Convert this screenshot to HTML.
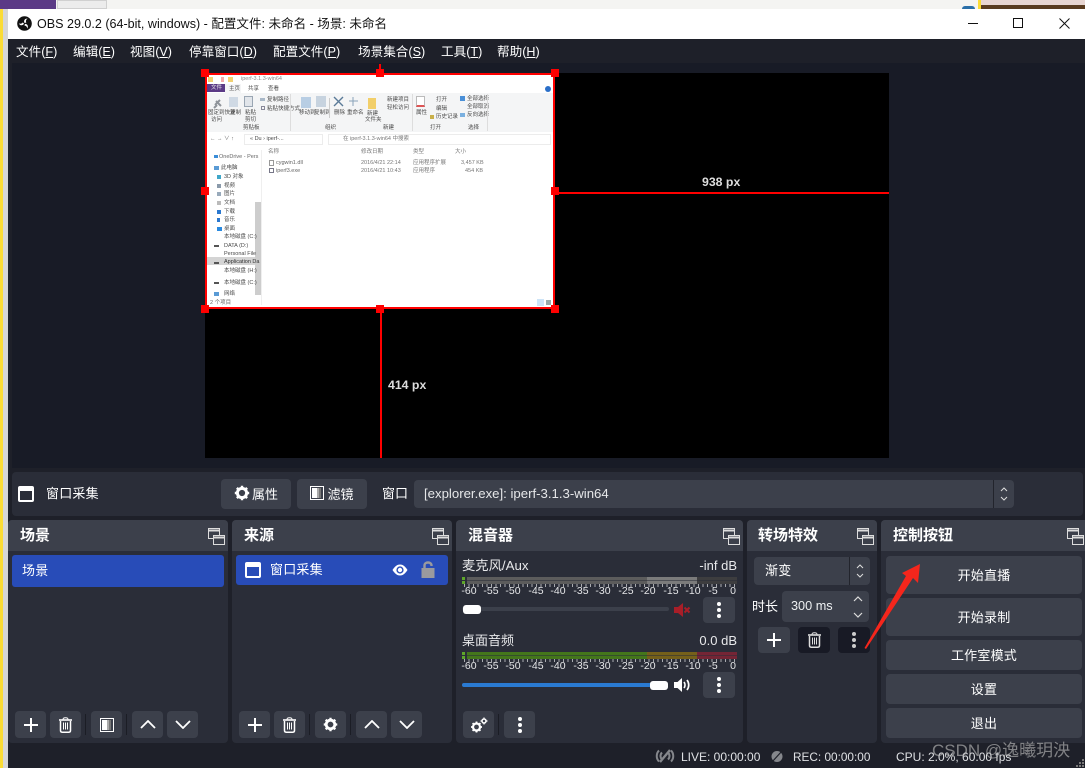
<!DOCTYPE html>
<html lang="zh"><head><meta charset="utf-8"><title>OBS</title>
<style>
html,body{margin:0;padding:0;width:1085px;height:768px;overflow:hidden;background:#f2f2f0}
*{box-sizing:border-box}
body{position:relative;font-family:"Liberation Sans","Noto Sans CJK SC",sans-serif;color:#fff;font-size:13px}
.a{position:absolute}
.t{position:absolute;white-space:nowrap;line-height:16px}
.btn{position:absolute;background:#3c404b;border-radius:4px;display:flex;align-items:center;justify-content:center;color:#fff}
.dock{position:absolute;top:520px;height:223px;background:#2a2d38;border-radius:4px;overflow:hidden}
.hd{position:absolute;left:0;right:0;top:0;height:31px;background:#3c404b}
.hd b{position:absolute;left:12px;top:7px;font-size:15px;line-height:18px;font-weight:700}
.hd svg{position:absolute;top:8px}
.menu u{text-decoration:underline}
.sep{position:absolute;width:1px;background:#1b1d25}
.tick{position:absolute;left:464px;width:273px;height:3px;background:repeating-linear-gradient(90deg,#a9abb0 0 1px,transparent 1px 4.5px)}
.sc{position:absolute;width:20px;margin-left:-10px;text-align:center;font-size:10.5px;line-height:12px;color:#e4e5e7}
.e{position:absolute;white-space:nowrap;font-size:5.5px;line-height:6px;color:#4a4a4a}
.ctl{font-size:13px;letter-spacing:.2px;padding-bottom:2px}
.lb{padding-bottom:2px}
.h{position:absolute;width:8px;height:8px;background:#f00}
#ex{filter:blur(.25px)}
</style></head><body>

<!-- desktop behind -->
<div class="a" style="left:0;top:0;width:3px;height:768px;background:#fbdc35"></div>
<div class="a" style="left:3px;top:0;width:5px;height:768px;background:#d6d6d6"></div>
<div class="a" style="left:0;top:0;width:56px;height:9px;background:#5b3a86"></div>
<div class="a" style="left:57px;top:0;width:50px;height:9px;background:#ececec;border:1px solid #d0d0d0"></div>
<div class="a" style="left:107px;top:0;width:871px;height:9px;background:#f4f4f2"></div>
<div class="a" style="left:962px;top:6px;width:13px;height:3px;border-radius:6px 6px 0 0;background:#2a6fa8"></div>
<div class="a" style="left:978px;top:0;width:3px;height:9px;background:#fbdc35"></div>
<div class="a" style="left:981px;top:0;width:104px;height:5px;background:#e8d6d2"></div>
<div class="a" style="left:981px;top:5px;width:104px;height:4px;background:#5a3c20"></div>

<!-- window -->
<div class="a" style="left:8px;top:9px;width:1077px;height:30px;background:#fff"></div>
<svg class="a" style="left:17px;top:16px" width="15" height="15" viewBox="0 0 15 15"><circle cx="7.5" cy="7.5" r="7.3" fill="#111"/><g fill="#fff"><path id="bl" d="M7.6 7C6.300 5 7.600 2.300 10.600 2.700 9 3.400 8.600 5 9.300 6.600 8.800 6.600 8.200 6.700 7.600 7z"/><path d="M7.600 7C6.300 5 7.600 2.300 10.600 2.700 9 3.400 8.600 5 9.300 6.600 8.800 6.600 8.200 6.700 7.600 7z" transform="rotate(120 7.500 7.500)"/><path d="M7.600 7C6.300 5 7.600 2.300 10.600 2.700 9 3.400 8.600 5 9.300 6.600 8.800 6.600 8.200 6.700 7.600 7z" transform="rotate(240 7.500 7.500)"/></g></svg>
<div class="t" style="left:37px;top:16px;color:#111;font-size:12.55px">OBS 29.0.2 (64-bit, windows) - 配置文件: 未命名 - 场景: 未命名</div>
<div class="a" style="left:968px;top:23px;width:10px;height:1px;background:#111"></div>
<div class="a" style="left:1013px;top:18px;width:10px;height:10px;border:1px solid #111"></div>
<svg class="a" style="left:1059px;top:18px" width="11" height="11" viewBox="0 0 11 11"><path d="M.5.5l10 10M10.500.5l-10 10" stroke="#111" fill="none"/></svg>

<div class="a" style="left:8px;top:39px;width:1077px;height:729px;background:#1e2029"></div>
<!-- menu -->
<div class="menu" style="font-size:12.6px">
<div class="t" style="left:16px;top:44px">文件(<u>F</u>)</div>
<div class="t" style="left:73px;top:44px">编辑(<u>E</u>)</div>
<div class="t" style="left:130px;top:44px">视图(<u>V</u>)</div>
<div class="t" style="left:189px;top:44px">停靠窗口(<u>D</u>)</div>
<div class="t" style="left:273px;top:44px">配置文件(<u>P</u>)</div>
<div class="t" style="left:358px;top:44px">场景集合(<u>S</u>)</div>
<div class="t" style="left:441px;top:44px">工具(<u>T</u>)</div>
<div class="t" style="left:497px;top:44px">帮助(<u>H</u>)</div>
</div>

<!-- preview -->
<div class="a" style="left:12px;top:63px;width:1073px;height:405px;background:#181b26"></div>
<div class="a" style="left:205px;top:73px;width:684px;height:385px;background:#000"></div>

<!-- captured explorer -->
<div id="ex" class="a" style="left:205px;top:73px;width:350px;height:236px;background:#fff;overflow:hidden">
  <div class="a" style="left:3px;top:4px;width:5px;height:5px;background:#f2d272"></div>
  <div class="a" style="left:16px;top:4px;width:3px;height:5px;background:#e88;opacity:.7"></div>
  <div class="a" style="left:23px;top:4px;width:5px;height:5px;background:#f2d272"></div>
  <div class="e" style="left:36px;top:3px;color:#888">iperf-3.1.3-win64</div>
  <div class="a" style="left:2px;top:20px;width:346px;height:39px;background:#f4f5f6"></div>
  <div class="a" style="left:2px;top:11px;width:18px;height:8px;background:#5b3a86"></div>
  <div class="e" style="left:6px;top:12px;color:#eee">文件</div>
  <div class="a" style="left:20px;top:11px;width:16px;height:9px;background:#f4f5f6"></div>
  <div class="e" style="left:24px;top:13px">主页</div>
  <div class="e" style="left:43px;top:13px">共享</div>
  <div class="e" style="left:63px;top:13px">查看</div>
  <svg class="a" style="left:8px;top:26px" width="9" height="10"><path d="M7 1L2 6M1 9l3-3M3 2l5 5" stroke="#8f949a" stroke-width="2"/></svg>
  <div class="a" style="left:24px;top:24px;width:9px;height:10px;background:#cfd9e4"></div>
  <div class="a" style="left:39px;top:23px;width:9px;height:11px;background:#e1e5ea;border:1px solid #9aa6b3"></div>
  <div class="a" style="left:55px;top:25px;width:5px;height:3px;background:#a9b8c8"></div>
  <div class="a" style="left:56px;top:33px;width:4px;height:4px;border:1px solid #889"></div>
  <div class="e" style="left:62px;top:24px">复制路径</div>
  <div class="e" style="left:62px;top:33px">粘贴快捷方式</div>
  <div class="e" style="left:3px;top:37px">固定到快速</div>
  <div class="e" style="left:6px;top:44px">访问</div>
  <div class="e" style="left:25px;top:37px">复制</div>
  <div class="e" style="left:40px;top:37px">粘贴</div>
  <div class="e" style="left:40px;top:44px">剪切</div>
  <div class="e" style="left:38px;top:52px">剪贴板</div>
  <div class="a" style="left:85px;top:21px;width:1px;height:37px;background:#ddd"></div>
  <div class="a" style="left:96px;top:24px;width:10px;height:11px;background:#b8cee4"></div>
  <div class="a" style="left:111px;top:23px;width:10px;height:11px;background:#c7d3df"></div>
  <div class="e" style="left:94px;top:37px">移动到</div>
  <div class="e" style="left:109px;top:37px">复制到</div>
  <div class="a" style="left:124px;top:25px;width:1px;height:20px;background:#ccc"></div>
  <svg class="a" style="left:128px;top:23px" width="28" height="11"><path d="M1 1l9 9M10 1l-9 9" stroke="#5a7a98" stroke-width="1.400"/><path d="M16 5h9M20 1v9" stroke="#8aa3ba"/></svg>
  <div class="e" style="left:129px;top:37px">删除</div>
  <div class="e" style="left:142px;top:37px">重命名</div>
  <div class="e" style="left:120px;top:52px">组织</div>
  <div class="a" style="left:163px;top:25px;width:8px;height:11px;background:#f2cf6a"></div>
  <div class="e" style="left:162px;top:38px">新建</div>
  <div class="e" style="left:160px;top:44px">文件夹</div>
  <div class="e" style="left:182px;top:24px">新建项目</div>
  <div class="e" style="left:182px;top:32px">轻松访问</div>
  <div class="e" style="left:178px;top:52px">新建</div>
  <div class="a" style="left:207px;top:21px;width:1px;height:37px;background:#ddd"></div>
  <div class="a" style="left:211px;top:23px;width:9px;height:11px;background:#fff;border:1px solid #bbb;border-bottom:2px solid #d55"></div>
  <div class="e" style="left:211px;top:37px">属性</div>
  <div class="e" style="left:231px;top:24px">打开</div>
  <div class="e" style="left:231px;top:33px">编辑</div>
  <div class="a" style="left:225px;top:42px;width:4px;height:4px;background:#c9b04a"></div>
  <div class="e" style="left:231px;top:41px">历史记录</div>
  <div class="e" style="left:225px;top:52px">打开</div>
  <div class="a" style="left:255px;top:23px;width:5px;height:5px;background:#4a90d8"></div>
  <div class="a" style="left:255px;top:40px;width:5px;height:4px;background:#7ab0e0"></div>
  <div class="e" style="left:262px;top:23px">全部选择</div>
  <div class="e" style="left:262px;top:31px">全部取消</div>
  <div class="e" style="left:262px;top:39px">反向选择</div>
  <div class="e" style="left:263px;top:52px">选择</div>
  <div class="a" style="left:282px;top:21px;width:1px;height:37px;background:#ddd"></div>
  <div class="a" style="left:340px;top:13px;width:6px;height:6px;border-radius:3px;background:#2a6fc9"></div>
  <div class="e" style="left:5px;top:63px;color:#666">← → ∨ ↑</div>
  <div class="a" style="left:39px;top:61px;width:79px;height:11px;border:1px solid #ececec"></div>
  <div class="e" style="left:45px;top:63px">« Du  ›  iperf-...</div>
  <div class="a" style="left:123px;top:61px;width:223px;height:11px;border:1px solid #ececec"></div>
  <div class="e" style="left:138px;top:63px;color:#777">在 iperf-3.1.3-win64 中搜索</div>
  <div class="a" style="left:56px;top:77px;width:1px;height:155px;background:#efefef"></div>
  <div class="a" style="left:50px;top:129px;width:6px;height:93px;background:#cdcdcd"></div>
  <div class="a" style="left:2px;top:184px;width:48px;height:8px;background:#d4d4d4"></div>
  <div class="e" style="left:14px;top:81px;color:#666">OneDrive - Pers</div>
  <div class="e" style="left:16px;top:92px">此电脑</div>
  <div class="e" style="left:19px;top:101px">3D 对象</div>
  <div class="e" style="left:19px;top:110px">视频</div>
  <div class="e" style="left:19px;top:118px">图片</div>
  <div class="e" style="left:19px;top:127px">文档</div>
  <div class="e" style="left:19px;top:136px">下载</div>
  <div class="e" style="left:19px;top:144px">音乐</div>
  <div class="e" style="left:19px;top:153px">桌面</div>
  <div class="e" style="left:19px;top:161px">本地磁盘 (C:)</div>
  <div class="e" style="left:19px;top:170px">DATA (D:)</div>
  <div class="e" style="left:19px;top:178px">Personal File</div>
  <div class="e" style="left:19px;top:186px;color:#333">Application Da</div>
  <div class="e" style="left:19px;top:195px">本地磁盘 (H:)</div>
  <div class="e" style="left:19px;top:207px">本地磁盘 (C:)</div>
  <div class="e" style="left:19px;top:218px">网络</div>
  <div class="a" style="left:9px;top:82px;width:4px;height:3px;background:#3a8dd8"></div>
  <div class="a" style="left:9px;top:93px;width:5px;height:4px;background:#5a9bd5"></div>
  <div class="a" style="left:12px;top:102px;width:4px;height:4px;background:#3fa7c9"></div>
  <div class="a" style="left:12px;top:111px;width:4px;height:4px;background:#8a9aaa"></div>
  <div class="a" style="left:12px;top:119px;width:4px;height:4px;background:#9ab"></div>
  <div class="a" style="left:12px;top:128px;width:4px;height:4px;background:#bbb"></div>
  <div class="a" style="left:12px;top:137px;width:4px;height:4px;background:#2a78d0"></div>
  <div class="a" style="left:12px;top:145px;width:3px;height:4px;background:#2a78d0"></div>
  <div class="a" style="left:12px;top:154px;width:5px;height:4px;background:#2a8ae0"></div>
  <div class="a" style="left:9px;top:172px;width:5px;height:2px;background:#555"></div>
  <div class="a" style="left:9px;top:189px;width:5px;height:2px;background:#555"></div>
  <div class="a" style="left:9px;top:209px;width:5px;height:2px;background:#555"></div>
  <div class="a" style="left:9px;top:219px;width:5px;height:4px;background:#5a9bd5"></div>
  <div class="e" style="left:63px;top:76px;color:#777">名称</div>
  <div class="e" style="left:156px;top:76px;color:#777">修改日期</div>
  <div class="e" style="left:208px;top:76px;color:#777">类型</div>
  <div class="e" style="left:250px;top:76px;color:#777">大小</div>
  <div class="a" style="left:64px;top:87px;width:5px;height:6px;border:1px solid #999"></div>
  <div class="e" style="left:71px;top:87px;color:#666">cygwin1.dll</div>
  <div class="e" style="left:156px;top:87px;color:#777">2016/4/21 22:14</div>
  <div class="e" style="left:208px;top:87px;color:#777">应用程序扩展</div>
  <div class="e" style="left:256px;top:87px;color:#777">3,457 KB</div>
  <div class="a" style="left:64px;top:95px;width:5px;height:5px;border:1px solid #778"></div>
  <div class="e" style="left:71px;top:95px;color:#666">iperf3.exe</div>
  <div class="e" style="left:156px;top:95px;color:#777">2016/4/21 10:43</div>
  <div class="e" style="left:208px;top:95px;color:#777">应用程序</div>
  <div class="e" style="left:260px;top:95px;color:#777">454 KB</div>
  <div class="e" style="left:5px;top:227px;color:#666">2 个项目</div>
  <div class="a" style="left:332px;top:226px;width:7px;height:7px;background:#cde4f7"></div>
  <div class="a" style="left:341px;top:227px;width:5px;height:5px;background:#9aa"></div>
</div>
<!-- selection -->
<div class="a" style="left:205px;top:73px;width:350px;height:236px;border:2px solid #f00"></div>
<div class="h" style="left:201px;top:69px"></div><div class="h" style="left:376px;top:69px"></div><div class="h" style="left:551px;top:69px"></div>
<div class="h" style="left:201px;top:187px"></div><div class="h" style="left:551px;top:187px"></div>
<div class="h" style="left:201px;top:305px"></div><div class="h" style="left:376px;top:305px"></div><div class="h" style="left:551px;top:305px"></div>
<div class="a" style="left:379px;top:64px;width:2px;height:6px;background:#f00"></div>
<div class="a" style="left:555px;top:192px;width:334px;height:2px;background:#f00"></div>
<div class="a" style="left:380px;top:309px;width:2px;height:149px;background:#f00"></div>
<div class="t" style="left:702px;top:174px;font:bold 12.3px/16px 'Liberation Sans',sans-serif;color:#ddd">938 px</div>
<div class="t" style="left:388px;top:377px;font:bold 12.3px/16px 'Liberation Sans',sans-serif;color:#ddd">414 px</div>

<!-- toolbar -->
<div class="a" style="left:12px;top:472px;width:1071px;height:44px;background:#2a2d38;border-radius:4px"></div>
<svg class="a" style="left:18px;top:486px" width="16" height="16"><rect x="1" y="1" width="14" height="14" rx="1" fill="none" stroke="#fff" stroke-width="2"/><rect x="1" y="1" width="14" height="4" fill="#fff"/></svg>
<div class="t" style="left:46px;top:486px;letter-spacing:.2px">窗口采集</div>
<div class="btn lb" style="left:221px;top:479px;width:70px;height:30px"><svg width="16" height="16" viewBox="0 0 16 16" style="margin-right:2px"><circle cx="8" cy="8" r="4.600" fill="none" stroke="#fff" stroke-width="3"/><path d="M8 .8v3M8 12.200v3M.8 8h3M12.200 8h3M2.900 2.900l2.100 2.100M11 11l2.100 2.100M2.900 13.100L5 11M11 5l2.100-2.100" stroke="#fff" stroke-width="2.400"/></svg><span>属性</span></div>
<div class="btn lb" style="left:297px;top:479px;width:70px;height:30px"><svg width="14" height="14" style="margin-right:3px"><rect x=".5" y=".5" width="13" height="13" fill="none" stroke="#fff"/><rect x="2" y="2" width="5" height="10" fill="#fff"/><rect x="7" y="2" width="2" height="10" fill="#aaa"/><rect x="9" y="2" width="2" height="10" fill="#777"/></svg><span>滤镜</span></div>
<div class="t" style="left:382px;top:486px">窗口</div>
<div class="a" style="left:414px;top:480px;width:600px;height:28px;background:#3c404b;border-radius:4px"></div>
<div class="a" style="left:993px;top:480px;width:1px;height:28px;background:#22242c"></div>
<div class="t" style="left:424px;top:486px;font-size:13.2px;color:#e6e7e9">[explorer.exe]: iperf-3.1.3-win64</div>
<svg class="a" style="left:999px;top:486px" width="10" height="16"><path d="M2 5l3-3 3 3M2 11l3 3 3-3" fill="none" stroke="#ddd"/></svg>

<!-- scenes dock -->
<div class="dock" style="left:8px;width:220px"><div class="hd"><b>场景</b><svg style="left:200px" width="17" height="17"><rect x=".5" y=".5" width="11" height="10" fill="#3c404b" stroke="#ddd"/><path d="M1 2.500h10" stroke="#ddd" stroke-width="2"/><rect x="5.500" y="7.500" width="11" height="9" fill="#3c404b" stroke="#ddd"/><path d="M6 9.500h10" stroke="#ddd" stroke-width="2"/></svg></div></div>
<div class="a" style="left:12px;top:555px;width:212px;height:32px;background:#284cb8;border-radius:3px"></div>
<div class="t" style="left:22px;top:563px;letter-spacing:.2px">场景</div>

<!-- sources dock -->
<div class="dock" style="left:232px;width:220px"><div class="hd"><b>来源</b><svg style="left:200px" width="17" height="17"><rect x=".5" y=".5" width="11" height="10" fill="#3c404b" stroke="#ddd"/><path d="M1 2.500h10" stroke="#ddd" stroke-width="2"/><rect x="5.500" y="7.500" width="11" height="9" fill="#3c404b" stroke="#ddd"/><path d="M6 9.500h10" stroke="#ddd" stroke-width="2"/></svg></div></div>
<div class="a" style="left:236px;top:555px;width:212px;height:30px;background:#284cb8;border-radius:3px"></div>
<svg class="a" style="left:245px;top:562px" width="16" height="16"><rect x="1" y="1" width="14" height="14" rx="1" fill="none" stroke="#fff" stroke-width="2"/><rect x="1" y="1" width="14" height="4" fill="#fff"/></svg>
<div class="t" style="left:270px;top:562px;letter-spacing:.2px">窗口采集</div>
<svg class="a" style="left:392px;top:563px" width="16" height="14" viewBox="0 0 16 14"><path d="M.5 7C3 3 5.500 1.500 8 1.500S13 3 15.500 7C13 11 10.500 12.500 8 12.500S3 11 .5 7z" fill="#fff"/><circle cx="8" cy="7" r="3.600" fill="#284cb8"/><circle cx="8" cy="7" r="2.200" fill="#fff"/></svg>
<svg class="a" style="left:421px;top:561px" width="14" height="17" viewBox="0 0 14 17"><rect x="0.500" y="7" width="13" height="10" fill="#9a9a9e"/><path d="M3.500 7V4.500C3.500 2.500 5 1.500 7 1.500S10.500 2.500 10.500 4.500V5" fill="none" stroke="#9a9a9e" stroke-width="2.400"/></svg>

<!-- mixer dock -->
<div class="dock" style="left:456px;width:287px"><div class="hd"><b>混音器</b><svg style="left:267px" width="17" height="17"><rect x=".5" y=".5" width="11" height="10" fill="#3c404b" stroke="#ddd"/><path d="M1 2.500h10" stroke="#ddd" stroke-width="2"/><rect x="5.500" y="7.500" width="11" height="9" fill="#3c404b" stroke="#ddd"/><path d="M6 9.500h10" stroke="#ddd" stroke-width="2"/></svg></div></div>
<div class="t" style="left:462px;top:558px;color:#e8e9eb;font-size:13.3px">麦克风/Aux</div>
<div class="t" style="right:348px;top:558px;color:#e8e9eb">-inf dB</div>
<div class="a" style="left:462px;top:577px;width:3px;height:3px;background:#5ea52a"></div>
<div class="a" style="left:462px;top:581px;width:3px;height:3px;background:#5ea52a"></div>
<div class="a" style="left:467px;top:577px;width:180px;height:7px;background:#5c5c5c"></div>
<div class="a" style="left:647px;top:577px;width:50px;height:7px;background:#7b7b7b"></div>
<div class="a" style="left:697px;top:577px;width:40px;height:7px;background:#3d3d3f"></div>
<div class="a" style="left:467px;top:580px;width:270px;height:1px;background:rgba(42,45,56,.55)"></div>
<div class="tick" style="top:584px"></div>
<div class="sc" style="left:469px;top:585px">-60</div><div class="sc" style="left:491px;top:585px">-55</div><div class="sc" style="left:513px;top:585px">-50</div><div class="sc" style="left:536px;top:585px">-45</div><div class="sc" style="left:558px;top:585px">-40</div><div class="sc" style="left:581px;top:585px">-35</div><div class="sc" style="left:603px;top:585px">-30</div><div class="sc" style="left:626px;top:585px">-25</div><div class="sc" style="left:648px;top:585px">-20</div><div class="sc" style="left:671px;top:585px">-15</div><div class="sc" style="left:693px;top:585px">-10</div><div class="sc" style="left:713px;top:585px">-5</div><div class="sc" style="left:733px;top:585px">0</div>
<div class="a" style="left:462px;top:607px;width:207px;height:4px;background:#3c404b;border-radius:2px"></div>
<div class="a" style="left:463px;top:605px;width:18px;height:9px;background:#fff;border-radius:3px"></div>
<svg class="a" style="left:674px;top:602px" width="18" height="16" viewBox="0 0 18 16"><path d="M0 5h4l5-4v14l-5-4H0z" fill="#a81e28"/><path d="M10.500 5.500l5 5M15.500 5.500l-5 5" stroke="#a81e28" stroke-width="2"/></svg>
<div class="btn" style="left:703px;top:597px;width:32px;height:26px"><svg width="6" height="18"><circle cx="3" cy="3" r="2" fill="#fff"/><circle cx="3" cy="9" r="2" fill="#fff"/><circle cx="3" cy="15" r="2" fill="#fff"/></svg></div>

<div class="t" style="left:462px;top:633px;color:#e8e9eb">桌面音频</div>
<div class="t" style="right:348px;top:633px;color:#e8e9eb">0.0 dB</div>
<div class="a" style="left:462px;top:652px;width:3px;height:3px;background:#5ea52a"></div>
<div class="a" style="left:462px;top:656px;width:3px;height:3px;background:#5ea52a"></div>
<div class="a" style="left:467px;top:652px;width:180px;height:7px;background:#44761b"></div>
<div class="a" style="left:647px;top:652px;width:50px;height:7px;background:#75601a"></div>
<div class="a" style="left:697px;top:652px;width:40px;height:7px;background:#742535"></div>
<div class="a" style="left:467px;top:655px;width:270px;height:1px;background:rgba(42,45,56,.55)"></div>
<div class="tick" style="top:659px"></div>
<div class="sc" style="left:469px;top:660px">-60</div><div class="sc" style="left:491px;top:660px">-55</div><div class="sc" style="left:513px;top:660px">-50</div><div class="sc" style="left:536px;top:660px">-45</div><div class="sc" style="left:558px;top:660px">-40</div><div class="sc" style="left:581px;top:660px">-35</div><div class="sc" style="left:603px;top:660px">-30</div><div class="sc" style="left:626px;top:660px">-25</div><div class="sc" style="left:648px;top:660px">-20</div><div class="sc" style="left:671px;top:660px">-15</div><div class="sc" style="left:693px;top:660px">-10</div><div class="sc" style="left:713px;top:660px">-5</div><div class="sc" style="left:733px;top:660px">0</div>
<div class="a" style="left:462px;top:683px;width:190px;height:4px;background:#2a7ad2;border-radius:2px"></div>
<div class="a" style="left:650px;top:681px;width:18px;height:9px;background:#fff;border-radius:3px"></div>
<svg class="a" style="left:674px;top:677px" width="18" height="16" viewBox="0 0 18 16"><path d="M0 5h3.500l4.500-4v14l-4.500-4H0z" fill="#fff"/><path d="M10 5c1.300 1.800 1.300 4.200 0 6M13 3c2.300 3 2.300 7 0 10" fill="none" stroke="#fff" stroke-width="1.700"/></svg>
<div class="btn" style="left:703px;top:672px;width:32px;height:26px"><svg width="6" height="18"><circle cx="3" cy="3" r="2" fill="#fff"/><circle cx="3" cy="9" r="2" fill="#fff"/><circle cx="3" cy="15" r="2" fill="#fff"/></svg></div>

<div class="btn" style="left:463px;top:711px;width:31px;height:27px"><svg width="18" height="16" viewBox="0 0 18 16"><circle cx="6.500" cy="10" r="3.500" fill="none" stroke="#fff" stroke-width="2.200"/><path d="M6.500 4.500v2M6.500 13.500v2M1 10h2M10 10h2M2.600 6.100l1.400 1.400M9 12.500l1.400 1.400M2.600 13.900L4 12.500M9 7.500l1.400-1.400" stroke="#fff" stroke-width="1.800"/><circle cx="14" cy="4" r="2" fill="none" stroke="#fff" stroke-width="1.500"/><path d="M14 .5v1M14 6.500v1M10.500 4h1M16.500 4h1" stroke="#fff" stroke-width="1.200"/></svg></div>
<div class="sep" style="left:498px;top:714px;height:21px"></div>
<div class="btn" style="left:504px;top:711px;width:31px;height:27px"><svg width="6" height="18"><circle cx="3" cy="3" r="2" fill="#fff"/><circle cx="3" cy="9" r="2" fill="#fff"/><circle cx="3" cy="15" r="2" fill="#fff"/></svg></div>

<!-- transitions dock -->
<div class="dock" style="left:747px;width:130px"><div class="hd"><b style="left:11px">转场特效</b><svg style="left:110px" width="17" height="17"><rect x=".5" y=".5" width="11" height="10" fill="#3c404b" stroke="#ddd"/><path d="M1 2.500h10" stroke="#ddd" stroke-width="2"/><rect x="5.500" y="7.500" width="11" height="9" fill="#3c404b" stroke="#ddd"/><path d="M6 9.500h10" stroke="#ddd" stroke-width="2"/></svg></div></div>
<div class="a" style="left:754px;top:557px;width:116px;height:28px;background:#3c404b;border-radius:4px"></div>
<div class="a" style="left:849px;top:557px;width:1px;height:28px;background:#22242c"></div>
<div class="t" style="left:765px;top:563px;letter-spacing:.2px">渐变</div>
<svg class="a" style="left:855px;top:563px" width="10" height="16"><path d="M2 5l3-3 3 3M2 11l3 3 3-3" fill="none" stroke="#ddd"/></svg>
<div class="t" style="left:752px;top:599px">时长</div>
<div class="a" style="left:782px;top:591px;width:87px;height:31px;background:#3c404b;border-radius:4px"></div>
<div class="t" style="left:791px;top:598px;color:#eef0f2;font-size:12.7px">300 ms</div>
<svg class="a" style="left:852px;top:595px" width="12" height="24"><path d="M2 6l4-4 4 4M2 18l4 4 4-4" fill="none" stroke="#ddd" stroke-width="1.200"/></svg>
<div class="btn" style="left:758px;top:627px;width:32px;height:26px"><svg width="14" height="14"><path d="M7 0v14M0 7h14" stroke="#fff" stroke-width="2"/></svg></div>
<div class="btn" style="left:798px;top:627px;width:32px;height:26px;background:#181a25"><svg width="15" height="16" viewBox="0 0 15 16"><path d="M1 3h13" stroke="#ddd" stroke-width="1.600"/><path d="M5 2.500C5 1 6 .8 7.500.8S10 1 10 2.500" stroke="#ddd" fill="none"/><path d="M2.500 4v9.500c0 1 .7 1.700 1.700 1.700h6.600c1 0 1.700-.7 1.700-1.700V4" fill="none" stroke="#ddd" stroke-width="1.500"/><path d="M5.500 5.500v7M7.500 5.500v7M9.500 5.500v7" stroke="#ddd"/></svg></div>
<div class="btn" style="left:838px;top:627px;width:32px;height:26px;background:#181a25"><svg width="6" height="18"><circle cx="3" cy="3" r="2" fill="#ccc"/><circle cx="3" cy="9" r="2" fill="#ccc"/><circle cx="3" cy="15" r="2" fill="#ccc"/></svg></div>

<!-- controls dock -->
<div class="dock" style="left:881px;width:204px;border-radius:4px 0 0 4px"><div class="hd"><b>控制按钮</b><svg style="left:186px" width="17" height="17"><rect x=".5" y=".5" width="11" height="10" fill="#3c404b" stroke="#ddd"/><path d="M1 2.500h10" stroke="#ddd" stroke-width="2"/><rect x="5.500" y="7.500" width="11" height="9" fill="#3c404b" stroke="#ddd"/><path d="M6 9.500h10" stroke="#ddd" stroke-width="2"/></svg></div></div>
<div class="btn ctl" style="left:886px;top:556px;width:196px;height:38px">开始直播</div>
<div class="btn ctl" style="left:886px;top:598px;width:196px;height:38px">开始录制</div>
<div class="btn ctl" style="left:886px;top:640px;width:196px;height:30px">工作室模式</div>
<div class="btn ctl" style="left:886px;top:674px;width:196px;height:30px">设置</div>
<div class="btn ctl" style="left:886px;top:708px;width:196px;height:30px">退出</div>

<!-- scene toolbar -->
<div class="btn" style="left:15px;top:711px;width:31px;height:27px"><svg width="14" height="14"><path d="M7 0v14M0 7h14" stroke="#fff" stroke-width="2"/></svg></div>
<div class="btn" style="left:50px;top:711px;width:31px;height:27px"><svg width="15" height="16" viewBox="0 0 15 16"><path d="M1 3h13" stroke="#fff" stroke-width="1.600"/><path d="M5 2.500C5 1 6 .8 7.500.8S10 1 10 2.500" stroke="#fff" fill="none"/><path d="M2.500 4v9.500c0 1 .7 1.700 1.700 1.700h6.600c1 0 1.700-.7 1.700-1.700V4" fill="none" stroke="#fff" stroke-width="1.500"/><path d="M5.500 5.500v7M7.500 5.500v7M9.500 5.500v7" stroke="#fff"/></svg></div>
<div class="sep" style="left:85px;top:714px;height:21px"></div>
<div class="btn" style="left:91px;top:711px;width:31px;height:27px"><svg width="14" height="14"><rect x=".5" y=".5" width="13" height="13" fill="none" stroke="#fff"/><rect x="2" y="2" width="5" height="10" fill="#fff"/><rect x="7" y="2" width="2" height="10" fill="#aaa"/><rect x="9" y="2" width="2" height="10" fill="#777"/></svg></div>
<div class="sep" style="left:126px;top:714px;height:21px"></div>
<div class="btn" style="left:132px;top:711px;width:31px;height:27px"><svg width="16" height="9"><path d="M1 8l7-7 7 7" fill="none" stroke="#fff" stroke-width="1.800"/></svg></div>
<div class="btn" style="left:167px;top:711px;width:31px;height:27px"><svg width="16" height="9"><path d="M1 1l7 7 7-7" fill="none" stroke="#fff" stroke-width="1.800"/></svg></div>

<!-- source toolbar -->
<div class="btn" style="left:239px;top:711px;width:31px;height:27px"><svg width="14" height="14"><path d="M7 0v14M0 7h14" stroke="#fff" stroke-width="2"/></svg></div>
<div class="btn" style="left:274px;top:711px;width:31px;height:27px"><svg width="15" height="16" viewBox="0 0 15 16"><path d="M1 3h13" stroke="#fff" stroke-width="1.600"/><path d="M5 2.500C5 1 6 .8 7.500.8S10 1 10 2.500" stroke="#fff" fill="none"/><path d="M2.500 4v9.500c0 1 .7 1.700 1.700 1.700h6.600c1 0 1.700-.7 1.700-1.700V4" fill="none" stroke="#fff" stroke-width="1.500"/><path d="M5.500 5.500v7M7.500 5.500v7M9.500 5.500v7" stroke="#fff"/></svg></div>
<div class="sep" style="left:309px;top:714px;height:21px"></div>
<div class="btn" style="left:315px;top:711px;width:31px;height:27px"><svg width="15" height="15" viewBox="0 0 16 16"><circle cx="8" cy="8" r="4.600" fill="none" stroke="#fff" stroke-width="3"/><path d="M8 .8v3M8 12.200v3M.8 8h3M12.200 8h3M2.900 2.900l2.100 2.100M11 11l2.100 2.100M2.900 13.100L5 11M11 5l2.100-2.100" stroke="#fff" stroke-width="2.400"/></svg></div>
<div class="sep" style="left:350px;top:714px;height:21px"></div>
<div class="btn" style="left:356px;top:711px;width:31px;height:27px"><svg width="16" height="9"><path d="M1 8l7-7 7 7" fill="none" stroke="#fff" stroke-width="1.800"/></svg></div>
<div class="btn" style="left:391px;top:711px;width:31px;height:27px"><svg width="16" height="9"><path d="M1 1l7 7 7-7" fill="none" stroke="#fff" stroke-width="1.800"/></svg></div>

<!-- status bar -->
<svg class="a" style="left:655px;top:748px" width="20" height="16" viewBox="0 0 20 16"><path d="M4 2.500C1 5.500 1 10.500 4 13.500M16 2.500c3 3 3 8 0 11" fill="none" stroke="#85878c" stroke-width="2"/><path d="M7 4.500c-2 2-2 5 0 7M13 4.500c2 2 2 5 0 7" fill="none" stroke="#85878c" stroke-width="2"/><path d="M5 14L15 2" stroke="#85878c" stroke-width="2.400"/></svg>
<div class="t" style="left:681px;top:749px;font-size:12px;color:#dfe1e4">LIVE: 00:00:00</div>
<svg class="a" style="left:771px;top:750px" width="12" height="13" viewBox="0 0 12 13"><circle cx="6" cy="6.500" r="5.500" fill="#85878c"/><path d="M1 12L11 1" stroke="#1e2029" stroke-width="1.200"/></svg>
<div class="t" style="left:793px;top:749px;font-size:11.8px;color:#dfe1e4">REC: 00:00:00</div>
<div class="t" style="left:896px;top:749px;font-size:12px;color:#dfe1e4">CPU: 2.0%, 60.00 fps</div>
<div class="t" style="left:932px;top:741px;font-size:17px;line-height:20px;color:rgba(190,190,190,.62)">CSDN @逸曦玥泱</div>
<svg class="a" style="left:1075px;top:758px" width="10" height="10"><path d="M7 1h2v2H7zM4 4h2v2H4zM7 4h2v2H7zM1 7h2v2H1zM4 7h2v2H4zM7 7h2v2H7z" fill="#777"/></svg>

<!-- red annotation arrow -->
<svg class="a" style="left:860px;top:560px" width="65" height="92" viewBox="860 560 65 92"><path d="M864.500 648L906 576 902 573 920 564 918 583 913 578 866 649z" fill="#f5261c"/></svg>
</body></html>
